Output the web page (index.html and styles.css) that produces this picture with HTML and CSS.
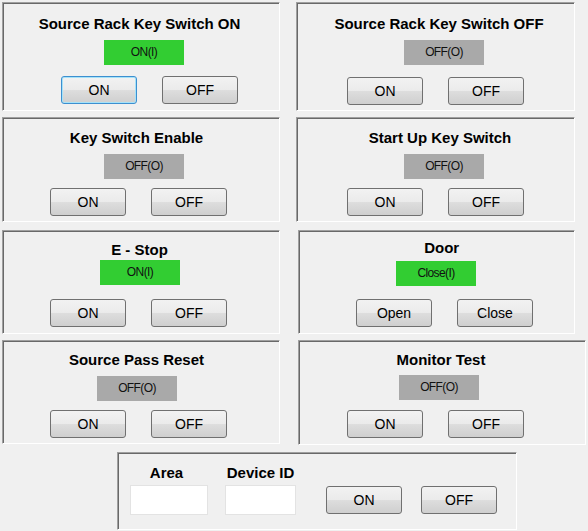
FILE: index.html
```html
<!DOCTYPE html>
<html>
<head>
<meta charset="utf-8">
<title>Switch Panel</title>
<link rel="stylesheet" href="styles.css">
</head>
<body>
<div class="screen">
  <div class="row row-1">
    <section class="panel p1">
      <h2 class="title">Source Rack Key Switch ON</h2>
      <div class="status on">ON(I)</div>
      <div class="buttons"><button class="btn focused">ON</button><button class="btn">OFF</button></div>
    </section>
    <section class="panel p2">
      <h2 class="title">Source Rack Key Switch OFF</h2>
      <div class="status off">OFF(O)</div>
      <div class="buttons"><button class="btn">ON</button><button class="btn">OFF</button></div>
    </section>
  </div>
  <div class="row row-2">
    <section class="panel p3">
      <h2 class="title">Key Switch Enable</h2>
      <div class="status off">OFF(O)</div>
      <div class="buttons"><button class="btn">ON</button><button class="btn">OFF</button></div>
    </section>
    <section class="panel p4">
      <h2 class="title">Start Up Key Switch</h2>
      <div class="status off">OFF(O)</div>
      <div class="buttons"><button class="btn">ON</button><button class="btn">OFF</button></div>
    </section>
  </div>
  <div class="row row-3">
    <section class="panel p5">
      <h2 class="title">E - Stop</h2>
      <div class="status on">ON(I)</div>
      <div class="buttons"><button class="btn">ON</button><button class="btn">OFF</button></div>
    </section>
    <section class="panel p6">
      <h2 class="title">Door</h2>
      <div class="status on">Close(I)</div>
      <div class="buttons"><button class="btn">Open</button><button class="btn">Close</button></div>
    </section>
  </div>
  <div class="row row-4">
    <section class="panel p7">
      <h2 class="title">Source Pass Reset</h2>
      <div class="status off">OFF(O)</div>
      <div class="buttons"><button class="btn">ON</button><button class="btn">OFF</button></div>
    </section>
    <section class="panel p8">
      <h2 class="title">Monitor Test</h2>
      <div class="status off">OFF(O)</div>
      <div class="buttons"><button class="btn">ON</button><button class="btn">OFF</button></div>
    </section>
  </div>
  <section class="panel p9">
    <div class="field field-area">
      <label class="field-label">Area</label>
      <input class="field-input" type="text">
    </div>
    <div class="field field-device">
      <label class="field-label">Device ID</label>
      <input class="field-input" type="text">
    </div>
    <button class="btn btn-on">ON</button>
    <button class="btn btn-off">OFF</button>
  </section>
</div>
</body>
</html>
```
FILE: styles.css
```css
* { box-sizing: border-box; }

html, body {
  margin: 0;
  padding: 0;
  background: #f0f0f0;
  width: 588px;
  height: 531px;
  overflow: hidden;
  font-family: "Liberation Sans", Arial, sans-serif;
  color: #000;
}

.screen {
  display: flex;
  flex-direction: column;
}

.row {
  display: flex;
  align-items: flex-start;
}
.row-1 { margin-top: 2px; }
.row-2 { margin-top: 6px; }
.row-3 { margin-top: 8px; }
.row-4 { margin-top: 6px; }

.panel {
  border-top: 1px solid #a0a0a0;
  border-left: 1px solid #a0a0a0;
  border-right: 1px solid #ffffff;
  border-bottom: 1px solid #ffffff;
  box-shadow: inset 1px 1px 0 #696969;
  background: #f0f0f0;
  display: flex;
  flex-direction: column;
  align-items: flex-start;
}

.title {
  margin: var(--ty) 0 0 0;
  width: calc(2 * var(--tc));
  font-size: 15px;
  line-height: 18px;
  font-weight: bold;
  text-align: center;
  white-space: nowrap;
}

.status {
  margin: var(--sy) 0 0 var(--sx);
  width: 80px;
  height: 25px;
  line-height: 25px;
  text-align: center;
  font-size: 12px;
  letter-spacing: -0.6px;
  color: #111;
}
.status.on { background: #32cd32; }
.status.off { background: #a9a9a9; }

.buttons {
  margin: var(--by) 0 0 var(--bx);
  display: flex;
  gap: 25px;
}

.btn {
  width: 76px;
  height: 28px;
  padding: 0;
  margin: 0;
  border: 1px solid #707070;
  border-radius: 3px;
  background: linear-gradient(#f2f2f2 0%, #ebebeb 48%, #dddddd 52%, #cfcfcf 100%);
  font-family: "Liberation Sans", Arial, sans-serif;
  font-size: 14px;
  line-height: 26px;
  color: #000;
  text-align: center;
}
.btn.focused {
  border-color: #3c8fd0;
  box-shadow: inset 0 0 0 1px #a6e2f8;
}

/* Per-panel placement */
.p1 { width: 278px; height: 109px; margin-left: 2px;
  --tc: 136.5px; --ty: 12px; --sy: 7px; --sx: 101px; --by: 11px; --bx: 58px; }
.p2 { width: 279px; height: 109px; margin-left: 16px;
  --tc: 142px; --ty: 12px; --sy: 7px; --sx: 107px; --by: 12px; --bx: 50px; }
.p3 { width: 278px; height: 105px; margin-left: 2px;
  --tc: 133.5px; --ty: 11px; --sy: 7px; --sx: 101px; --by: 9px; --bx: 47px; }
.p4 { width: 279px; height: 105px; margin-left: 16px;
  --tc: 143px; --ty: 11px; --sy: 7px; --sx: 107px; --by: 9px; --bx: 50px; }
.p5 { width: 278px; height: 104px; margin-left: 2px;
  --tc: 136.5px; --ty: 10px; --sy: 1px; --sx: 97px; --by: 14px; --bx: 47px; }
.p6 { width: 277px; height: 104px; margin-left: 18px;
  --tc: 142.7px; --ty: 8px; --sy: 4px; --sx: 97px; --by: 13px; --bx: 57px; }
.p7 { width: 278px; height: 104px; margin-left: 2px;
  --tc: 133.5px; --ty: 10px; --sy: 7px; --sx: 94px; --by: 9px; --bx: 47px; }
.p8 { width: 288px; height: 105px; margin-left: 18px;
  --tc: 142px; --ty: 10px; --sy: 6px; --sx: 100px; --by: 10px; --bx: 48px; }

/* Bottom panel */
.p9 {
  width: 400px;
  height: 78px;
  margin: 7px 0 0 117px;
  flex-direction: row;
  align-items: flex-start;
  padding-top: 11px;
}

.field {
  display: flex;
  flex-direction: column;
  align-items: center;
}
.field-area { margin-left: 12px; width: 78px; }
.field-area .field-label { padding-right: 5px; }
.field-device { margin-left: 17px; width: 71px; }

.field-label {
  font-size: 15px;
  line-height: 18px;
  font-weight: bold;
  white-space: nowrap;
}

.field-input {
  margin-top: 3px;
  width: 100%;
  height: 30px;
  border: 1px solid #e3e3e3;
  background: #ffffff;
  padding: 0 3px;
  font-family: "Liberation Sans", Arial, sans-serif;
  font-size: 12px;
  outline: none;
}

.p9 .btn { margin-top: 22px; }
.p9 .btn-on { margin-left: 30px; }
.p9 .btn-off { margin-left: 19px; }
```
